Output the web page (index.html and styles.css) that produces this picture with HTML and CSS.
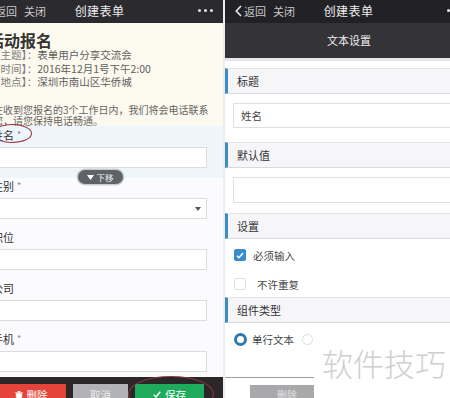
FILE: index.html
```html
<!DOCTYPE html>
<html lang="zh-CN">
<head>
<meta charset="utf-8">
<title>创建表单</title>
<link rel="stylesheet" href="styles.css">
</head>
<body>
<div class="screen">
  <section class="pane pane-left">
    <div class="phone phone-left">
      <header class="topbar topbar-left">
        <div class="nav">
          <svg class="chev" width="7" height="12" viewBox="0 0 7 12"><path d="M6 1 1.3 6 6 11" fill="none" stroke="#e2e2e2" stroke-width="1.7"/></svg>
          <span>返回</span><span class="close">关闭</span>
        </div>
        <div class="title">创建表单</div>
        <div class="more"><i></i><i></i><i></i></div>
      </header>
      <div class="intro">
        <h1>活动报名</h1>
        <p class="info"><span class="k">【主题】：</span>表单用户分享交流会</p>
        <p class="info"><span class="k">【时间】：</span>2016年12月1号下午2:00</p>
        <p class="info"><span class="k">【地点】：</span>深圳市南山区华侨城</p>
        <p class="note">在收到您报名的3个工作日内，我们将会电话联系<br>您，请您保持电话畅通。</p>
      </div>
      <div class="form">
        <div class="field active">
          <div class="label">姓名<em>*</em></div>
          <div class="box"></div>
        </div>
        <div class="field">
          <div class="label">性别<em>*</em></div>
          <div class="box select"><svg width="6" height="4" viewBox="0 0 6 4"><path d="M0 0h6L3 4z" fill="#555"/></svg></div>
        </div>
        <div class="field">
          <div class="label">职位</div>
          <div class="box"></div>
        </div>
        <div class="field">
          <div class="label">公司</div>
          <div class="box"></div>
        </div>
        <div class="field">
          <div class="label">手机<em>*</em></div>
          <div class="box"></div>
        </div>
      </div>
      <footer class="actions">
        <div class="btn btn-red">
          <svg width="8" height="9" viewBox="0 0 8 9"><path d="M0 1.5h8M3 1.5V0h2v1.5M1 2.5h6L6.4 9H1.6z" fill="#fff" stroke="#fff" stroke-width=".6"/></svg>
          <span>删除</span>
        </div>
        <div class="btn btn-gray">取消</div>
        <div class="btn btn-green">
          <svg width="8" height="7" viewBox="0 0 8 7"><path d="M.8 3.8 3 6 7.2.8" fill="none" stroke="#fff" stroke-width="1.5"/></svg>
          <span>保存</span>
        </div>
      </footer>
    </div>
    <div class="move-pill">
      <svg width="7" height="5" viewBox="0 0 7 5"><path d="M0 0h7L3.5 5z" fill="#fff"/></svg>
      <span>下移</span>
    </div>
    <div class="ring ring-name"></div>
    <div class="ring ring-save"></div>
  </section>

  <div class="divider"></div>

  <section class="pane pane-right">
    <div class="phone phone-right">
      <header class="topbar topbar-right">
        <div class="nav">
          <svg class="chev" width="7" height="12" viewBox="0 0 7 12"><path d="M6 1 1.3 6 6 11" fill="none" stroke="#e2e2e2" stroke-width="1.7"/></svg>
          <span>返回</span><span class="close">关闭</span>
        </div>
        <div class="title">创建表单</div>
        <div class="more"><i></i><i></i><i></i></div>
      </header>
      <div class="subbar">文本设置</div>
      <div class="settings">
        <div class="sec-head sh-1">标题</div>
        <div class="r-input ri-1">姓名</div>
        <div class="sec-head sh-2">默认值</div>
        <div class="r-input ri-2"></div>
        <div class="sec-head sh-3">设置</div>
        <div class="opt opt-1">
          <span class="check on"><svg width="8" height="7" viewBox="0 0 8 7"><path d="M1 3.7 3 5.7 7 1" fill="none" stroke="#fff" stroke-width="1.5"/></svg></span>
          <span>必须输入</span>
        </div>
        <div class="opt opt-2">
          <span class="check"></span>
          <span class="opt-text">不许重复</span>
        </div>
        <div class="sec-head sh-4">组件类型</div>
        <div class="opt opt-3">
          <span class="radio on"></span>
          <span>单行文本</span>
          <span class="radio"></span>
        </div>
        <div class="r-footer">
          <div class="r-btn">删除</div>
        </div>
      </div>
    </div>
  </section>

  <div class="watermark">软件技巧</div>
</div>
</body>
</html>
```

FILE: styles.css
```css
* { box-sizing: border-box; margin: 0; padding: 0; }

html, body {
  width: 450px;
  height: 398px;
  overflow: hidden;
  background: #fff;
}

body {
  font-family: "Noto Sans CJK SC", "Noto Sans", sans-serif;
  color: #333;
}

.screen {
  position: relative;
  display: flex;
  width: 450px;
  height: 398px;
  overflow: hidden;
}

.pane {
  position: relative;
  flex: none;
  height: 398px;
  overflow: hidden;
}

.pane-left { width: 223px; }
.divider { width: 2px; flex: none; background: #ececee; }
.pane-right { width: 225px; background: #fff; }

.phone {
  width: 248px;
  height: 398px;
  display: flex;
  flex-direction: column;
}

.phone-left { margin-left: -24px; background: #fbfafc; }

/* top bar */
.topbar {
  flex: none;
  height: 23px;
  display: grid;
  grid-template-columns: 1fr auto 1fr;
  align-items: center;
  padding: 0 11px 2px 10px;
  color: #c9c9c9;
  font-size: 11px;
}

.topbar-left { background: #2b2a2e; }
.topbar-right { background: #222125; }

.nav { display: flex; align-items: center; line-height: 14px; }
.nav .chev { margin-right: 2px; }
.nav .close { margin-left: 7px; }

.title {
  color: #efefef;
  font-size: 12px;
  letter-spacing: 0.4px;
  line-height: 16px;
}

.more {
  justify-self: end;
  display: flex;
  gap: 3px;
}
.more i {
  display: block;
  width: 3px;
  height: 3px;
  border-radius: 50%;
  background: #e6e6e6;
}

/* intro */
.intro {
  flex: none;
  height: 103px;
  background: #fcf9ee;
  padding-top: 8px;
}

.intro h1 {
  font-size: 16px;
  line-height: 18px;
  font-weight: 700;
  color: #333;
  padding-left: 12px;
  margin-bottom: -1px;
}

.info {
  font-size: 10.5px;
  line-height: 13.5px;
  color: #5e5e5e;
  padding-left: 14px;
}
.info .k { color: #7c7c7c; }

.note {
  margin-top: 15px;
  font-size: 10px;
  line-height: 11.5px;
  color: #666;
  padding-left: 17px;
  white-space: nowrap;
}

/* form */
.form {
  flex: none;
  height: 251px;
  overflow: hidden;
  background: #fbfafc;
}

.field { padding: 1px 0 10px; }
.field.active { padding: 2px 0 10px; background: #eef5fb; }

.label {
  height: 14px;
  line-height: 14px;
  font-size: 11px;
  color: #333;
  padding-left: 16px;
  margin-bottom: 5px;
}
.label em {
  font-style: normal;
  font-size: 9px;
  color: #888;
  vertical-align: top;
  margin-left: 3px;
}

.box {
  margin-left: 12px;
  width: 219px;
  height: 21px;
  background: #fff;
  border: 1px solid #dcdcdf;
}
.box.select {
  display: flex;
  align-items: center;
  justify-content: flex-end;
  padding-right: 5px;
}

/* bottom bar */
.actions {
  flex: 1;
  background: #2b2729;
  display: flex;
  gap: 7px;
  padding: 7px 0 0 20px;
}

.btn {
  height: 20px;
  display: flex;
  align-items: flex-start;
  justify-content: center;
  gap: 4px;
  padding-top: 5px;
  color: #fff;
  font-size: 10.5px;
  line-height: 12px;
}
.btn svg { margin-top: 2px; }
.btn-red { width: 70px; background: #e5443b; }
.btn-gray { width: 55px; background: #b3b2b6; color: #eee; }
.btn-green { width: 69px; background: #1eac5c; }

/* overlays on the left screenshot */
.move-pill {
  position: absolute;
  left: 78px;
  top: 170px;
  width: 45px;
  height: 14px;
  border-radius: 7px;
  background: #5f6368;
  box-shadow: 0 0 0 1.5px #c9ced4;
  color: #f2f2f2;
  font-size: 8.5px;
  display: flex;
  align-items: center;
  justify-content: center;
  gap: 2px;
}

.ring {
  position: absolute;
  border: 1.5px solid #9b2c3b;
  border-radius: 50%;
}
.ring-name { left: -8px; top: 124px; width: 40px; height: 19px; }
.ring-save { left: 128px; top: 376px; width: 86px; height: 36px; border-color: #8d3940; }

/* right panel */
.subbar {
  flex: none;
  height: 38px;
  background: #343337;
  border-bottom: 3px solid #e6e6e8;
  color: #eeeeee;
  font-size: 11px;
  display: flex;
  align-items: center;
  justify-content: center;
  padding-bottom: 1px;
}

.settings {
  flex: 1;
  display: flex;
  flex-direction: column;
}

.sec-head {
  height: 26px;
  background: #f6f5f8;
  border-top: 1px solid #e4e3e7;
  border-bottom: 1px solid #d9d8dc;
  border-left: 3px solid #3b8ec3;
  padding-left: 9px;
  font-size: 11px;
  line-height: 24px;
  color: #333;
}
.sh-1 { margin-top: 7px; }
.sh-2 { margin-top: 14px; }
.sh-3 { margin-top: 10px; }
.sh-4 { margin-top: 5px; }

.r-input {
  margin-left: 8px;
  height: 25px;
  border: 1px solid #e0e0e2;
  background: #fff;
  padding-left: 7px;
  font-size: 10.5px;
  line-height: 23px;
  color: #444;
}
.ri-1 { margin-top: 9px; }
.ri-2 { margin-top: 9px; height: 26px; }

.opt {
  height: 16px;
  display: flex;
  align-items: center;
  padding-left: 9px;
  font-size: 10.5px;
  color: #444;
}
.opt-1 { margin-top: 8px; gap: 7px; }
.opt-2 { margin-top: 13px; gap: 11px; }
.opt-3 { margin-top: 8px; gap: 5px; }

.check {
  width: 12px;
  height: 12px;
  border: 1px solid #e0e0e2;
  border-radius: 2px;
  display: flex;
  align-items: center;
  justify-content: center;
}
.check.on { background: #3a8dcc; border-color: #3a8dcc; }

.radio {
  width: 11px;
  height: 11px;
  border-radius: 50%;
  border: 1px solid #dedede;
  margin-left: 3px;
}
.radio.on {
  width: 13px;
  height: 13px;
  border: 3px solid #2d7bae;
  margin-left: 0;
}

.r-footer {
  margin-top: 30px;
  border-top: 1px solid #9c9c9c;
  padding: 7px 0 0 25px;
}

.r-btn {
  width: 74px;
  height: 20px;
  background: #a9a9ab;
  color: #e2e2e2;
  font-size: 10px;
  text-align: center;
  line-height: 20px;
}

/* watermark over the lower right corner */
.watermark {
  position: absolute;
  left: 314px;
  top: 342px;
  width: 136px;
  height: 56px;
  background: #fff;
  padding: 5px 0 0 8px;
  font-size: 31px;
  font-weight: 300;
  line-height: 31px;
  color: #cfcfcf;
  white-space: nowrap;
}
```
